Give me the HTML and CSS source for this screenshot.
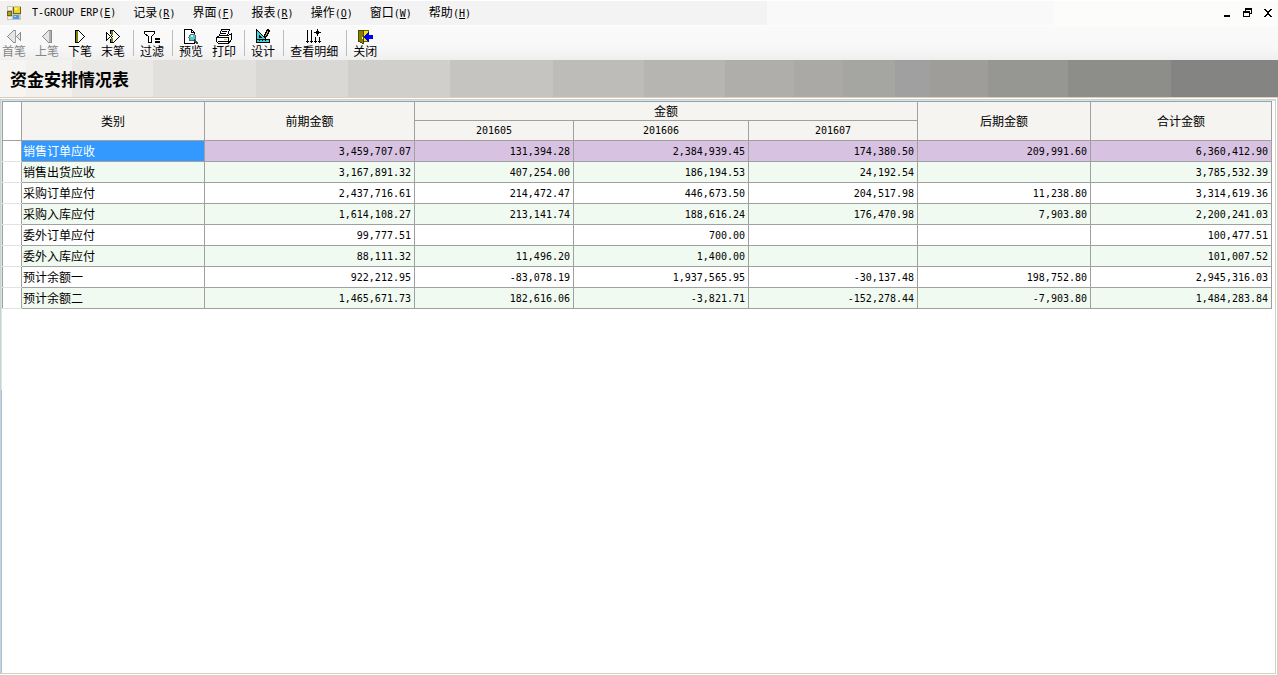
FILE: index.html
```html
<!DOCTYPE html>
<html lang="zh-CN">
<head>
<meta charset="utf-8">
<title>资金安排情况表</title>
<link rel="stylesheet" href="styles.css">
</head>
<body>
<header class="menubar">
  <svg class="app-icon" width="14" height="14" viewBox="0 0 14 14" shape-rendering="crispEdges" aria-hidden="true">
    <path fill="#c9c5bb" d="M0 0h14v14H0z"/><path fill="#f4f2ea" d="M1 1h4v3H1zM1 11h4v2H1z"/>
    <path fill="#6b6410" d="M0 5h5v5H0zM6 1h8v7H6z"/><path fill="#a8a02a" d="M1 6h3v3H1z"/>
    <path fill="#f0d820" d="M7 1h6v6H7z"/><path fill="#fff7a0" d="M8 2h2v2H8z"/><path fill="#4a9be8" d="M6 9h6v4H6z"/><path fill="#a9d3f8" d="M7 10h2v1H7z"/>
  </svg>
  <nav class="menus">
    <button>T-GROUP ERP(<u>E</u>)</button>
    <button><span>记录</span>(<u>R</u>)</button>
    <button><span>界面</span>(<u>F</u>)</button>
    <button><span>报表</span>(<u>R</u>)</button>
    <button><span>操作</span>(<u>O</u>)</button>
    <button><span>窗口</span>(<u>W</u>)</button>
    <button><span>帮助</span>(<u>H</u>)</button>
  </nav>
  <div class="window-controls">
    <button aria-label="最小化"><svg width="10" height="10" viewBox="0 0 10 10" shape-rendering="crispEdges"><path d="M1 7h6v2H1z"/></svg></button>
    <button aria-label="还原"><svg width="10" height="10" viewBox="0 0 10 10" shape-rendering="crispEdges"><path d="M2 0h7v6H7V5h1V2H3v1H2zM0 3h7v6H0zM1 5v3h5V5z" fill-rule="evenodd"/></svg></button>
    <button aria-label="关闭"><svg width="10" height="10" viewBox="0 0 10 10" shape-rendering="crispEdges"><path d="M1 1h2v1h1v1h2V2h1V1h2v1H8v1H7v1H6v2h1v1h1v1h1v1H7V8H6V7H4v1H3v1H1V8h1V7h1V6h1V4H3V3H2V2H1z"/></svg></button>
  </div>
</header>

<div class="toolbar" role="toolbar">
  <button disabled>
    <svg width="16" height="16" viewBox="0 0 16 16" shape-rendering="crispEdges"><path fill="#e6e6e6" stroke="#8c8c8c" d="M7.500 1.500L1.500 7.500L7.500 13.500H9.500V1.500zM14.500 3.500L10.500 7.500L14.500 11.500z"/><path fill="#a0a0a0" d="M9 1h1v13H9z"/></svg>
    <span>首笔</span>
  </button>
  <button disabled>
    <svg width="16" height="16" viewBox="0 0 16 16" shape-rendering="crispEdges"><path fill="#e6e6e6" stroke="#8c8c8c" d="M9.500 1.500L3.500 7.500L9.500 13.500H12.500V1.500z"/><path fill="#b0b0b0" d="M10 2h2v11h-2z"/></svg>
    <span>上笔</span>
  </button>
  <button>
    <svg width="16" height="16" viewBox="0 0 16 16" shape-rendering="crispEdges"><path fill="#fff" stroke="#000" d="M3.500 1.500H6.500L12.500 7.500L6.500 13.500H3.500z"/><path fill="#808000" d="M4 2h2v11H4z"/></svg>
    <span>下笔</span>
  </button>
  <button>
    <svg width="16" height="16" viewBox="0 0 16 16" shape-rendering="crispEdges"><path fill="#fff" stroke="#000" d="M1.500 3.500L5.500 7.500L1.500 11.500zM5.500 1.500H8.500L14.500 7.500L8.500 13.500H5.500V10.500L7.500 7.500L5.500 4.500z"/><path fill="#808000" d="M6 2h2v4H6zM6 9h2v4H6z"/></svg>
    <span>末笔</span>
  </button>
  <i class="separator"></i>
  <button>
    <svg width="16" height="16" viewBox="0 0 16 16" shape-rendering="crispEdges"><path fill="#fff" stroke="#000" d="M.5 2.500H10.500V4.500L7.500 7.500V13.500H4.500V7.500L.5 4.500z"/><path d="M11 9h5v2h-5zM11 12h5v2h-5z"/></svg>
    <span>过滤</span>
  </button>
  <i class="separator"></i>
  <button>
    <svg width="18" height="16" viewBox="0 0 18 16" shape-rendering="crispEdges"><path fill="#fff" stroke="#000" d="M2.500 .5H9.500L12.500 3.500V14.500H2.500z"/><path fill="none" stroke="#000" d="M9.500 .5V3.500H12.500"/><circle cx="10.500" cy="8.500" r="3.500" fill="#45cdd4" stroke="#666"/><path fill="#b7ffff" d="M9 6h2v2H9z"/><path stroke="#444" stroke-width="2" d="M12 11l4 4"/></svg>
    <span>预览</span>
  </button>
  <button>
    <svg width="18" height="16" viewBox="0 0 18 16" shape-rendering="crispEdges"><path fill="#fff" stroke="#000" d="M6.500 .5H14.500L12.500 6.500H4.500z"/><path stroke="#000" d="M7 2.500h5M6 4.500h5"/><path fill="#fff" stroke="#000" d="M4.500 6.500H13.500L16.500 4.500V10.500L13.500 14.500H3.500L1.500 12.500V8.500z"/><path stroke="#000" d="M2 8.500H14M3 12.500H13M13.500 8V14"/><path stroke="#e5c800" d="M9 10.500h3"/></svg>
    <span>打印</span>
  </button>
  <i class="separator"></i>
  <button>
    <svg width="16" height="16" viewBox="0 0 16 16" shape-rendering="crispEdges"><path fill="#35d5dc" stroke="#000" d="M1.500 .5L11.500 10.500H1.500z"/><path fill="#fff" stroke="#000" d="M4.500 6.500L6.500 8.500H4.500z"/><path fill="#35d5dc" stroke="#000" d="M1.500 10.500H14.500V13.500H1.500z"/><path stroke="#000" d="M4.500 10v2M7.500 10v2M10.500 10v2"/><path fill="#d9ad28" stroke="#000" d="M12.500 .5L14.500 1.500L11.500 7.500L9.500 8.500V6.500z"/></svg>
    <span>设计</span>
  </button>
  <i class="separator"></i>
  <button>
    <svg width="16" height="16" viewBox="0 0 16 16" shape-rendering="crispEdges"><path d="M1 1h1v13H1zM5 1h1v13H5zM0 12h3v1H0zM4 12h3v1H4zM11 0h1v7h-1zM8 3h7v1H8zM10 2h3v3h-3zM9 8h1v6H9zM8 12h3v1H8zM13 8h1v6h-1zM12 12h3v1h-3z"/></svg>
    <span>查看明细</span>
  </button>
  <i class="separator"></i>
  <button>
    <svg width="16" height="16" viewBox="0 0 16 16" shape-rendering="crispEdges"><path fill="#ffe400" stroke="#655f00" d="M3.500 1.500H11.500V12.500H3.500z"/><path fill="#858000" stroke="#4d4900" d="M1.500 1.500H6.500V14.500L1.500 12.500z"/><path fill="#fff" d="M5 8h1v2H5z"/><path fill="#0000f0" d="M7 7h1V6h1V5h1V4h1V3h1v3h4v4h-4v3h-1v-1h-1v-1H9v-1H8V9H7z"/></svg>
    <span>关闭</span>
  </button>
</div>

<h1 class="banner">资金安排情况表</h1>

<main class="frame">
  <div class="sheet">
    <table class="grid">
      <colgroup><col class="c-mark"><col class="c-type"><col class="c-prior"><col class="c-m5"><col class="c-m6"><col class="c-m7"><col class="c-later"><col class="c-total"></colgroup>
      <thead>
        <tr><td rowspan="2" class="mark"></td><th rowspan="2">类别</th><th rowspan="2">前期金额</th><th colspan="3">金额</th><th rowspan="2">后期金额</th><th rowspan="2">合计金额</th></tr>
        <tr><th>201605</th><th>201606</th><th>201607</th></tr>
      </thead>
      <tbody>
        <tr class="selected"><td class="mark"></td><th>销售订单应收</th><td>3,459,707.07</td><td>131,394.28</td><td>2,384,939.45</td><td>174,380.50</td><td>209,991.60</td><td>6,360,412.90</td></tr>
        <tr><td class="mark"></td><th>销售出货应收</th><td>3,167,891.32</td><td>407,254.00</td><td>186,194.53</td><td>24,192.54</td><td></td><td>3,785,532.39</td></tr>
        <tr><td class="mark"></td><th>采购订单应付</th><td>2,437,716.61</td><td>214,472.47</td><td>446,673.50</td><td>204,517.98</td><td>11,238.80</td><td>3,314,619.36</td></tr>
        <tr><td class="mark"></td><th>采购入库应付</th><td>1,614,108.27</td><td>213,141.74</td><td>188,616.24</td><td>176,470.98</td><td>7,903.80</td><td>2,200,241.03</td></tr>
        <tr><td class="mark"></td><th>委外订单应付</th><td>99,777.51</td><td></td><td>700.00</td><td></td><td></td><td>100,477.51</td></tr>
        <tr><td class="mark"></td><th>委外入库应付</th><td>88,111.32</td><td>11,496.20</td><td>1,400.00</td><td></td><td></td><td>101,007.52</td></tr>
        <tr><td class="mark"></td><th>预计余额一</th><td>922,212.95</td><td>-83,078.19</td><td>1,937,565.95</td><td>-30,137.48</td><td>198,752.80</td><td>2,945,316.03</td></tr>
        <tr><td class="mark"></td><th>预计余额二</th><td>1,465,671.73</td><td>182,616.06</td><td>-3,821.71</td><td>-152,278.44</td><td>-7,903.80</td><td>1,484,283.84</td></tr>
      </tbody>
    </table>
  </div>
</main>
</body>
</html>
```

FILE: styles.css
```css
* { box-sizing: border-box; }

body {
  margin: 0;
  min-height: 100vh;
  display: flex;
  flex-direction: column;
  background: #fff;
  color: #000;
  font: 12px/14px "Noto Sans CJK SC", sans-serif;
}

button {
  border: 0;
  padding: 0;
  background: none;
  color: inherit;
  font: inherit;
  white-space: nowrap;
}

svg { display: block; }

.menubar {
  display: flex;
  align-items: center;
  height: 25px;
  padding: 0 5px 0 7px;
  border-top: 1px solid #fff;
  background: linear-gradient(90deg, #f2f1f0 9.400%, #f3f3f3 9.400% 60%, #f9f9f9 60% 82.500%, #fcfdfa 82.500%);
}

.menus {
  display: flex;
  gap: 17px;
  margin-left: 11px;
}

.menus button {
  font-family: "DejaVu Sans Mono", monospace;
  font-size: 10px;
}

.menus span { font: 12px/14px "Noto Sans CJK SC", sans-serif; }

.window-controls {
  display: flex;
  gap: 10px;
  margin-left: auto;
}

.toolbar {
  display: flex;
  gap: 9px;
  height: 35px;
  padding: 3px 2px 0;
  border-top: 1px solid #fdfdfb;
  background: linear-gradient(#fafafa, #f8f8f8 60%, #efefef);
}

.toolbar button {
  display: flex;
  flex-direction: column;
  align-items: center;
  height: 28px;
}

.toolbar svg { flex: none; }
.toolbar span { line-height: 12px; }
.toolbar button:disabled { color: #858585; }

.separator {
  width: 1px;
  height: 26px;
  margin: 1px -3px 0 -1px;
  background: #bdbdbd;
}

.banner {
  height: 37px;
  margin: 0;
  padding: 0 10px;
  font-size: 17px;
  line-height: 37px;
  background: linear-gradient(90deg,
    #f6f5f1 2%, #f2f1ee 2% 5.600%, #eae9e6 5.600% 12%,
    #e1e0dc 12% 20%, #d9d8d4 20% 27.200%, #d0cfcc 27.200% 35.200%,
    #c6c4c1 35.200% 43.300%, #bebcb9 43.300% 50.400%, #b6b5b2 50.400% 56.700%,
    #afaeab 56.700% 62.100%, #aaa9a6 62.100% 66%, #a5a5a2 66% 70%,
    #a0a0a0 70% 72.800%, #9f9d9a 72.800% 77.300%, #969693 77.300% 83.600%,
    #8d8d8a 83.600% 91.600%, #848483 91.600%);
}

.frame {
  flex: 1;
  display: flex;
  padding: 1px 1px 1px 0;
  border: solid #d6cec2;
  border-width: 1px 1px 1px 0;
}

.sheet {
  flex: 1;
  padding: 1px 3px 0 1px;
  border: 1px solid #d6cec2;
  background: linear-gradient(#c4e8f8, #c4e8f8) top / 100% 1px no-repeat,
    linear-gradient(#d0e8f4 290px, #9cc4ea 290px) left / 1px 100% no-repeat #fff;
}

.grid {
  width: 100%;
  table-layout: fixed;
  border-collapse: collapse;
  background: #fff;
}

.c-mark { width: 19px; }
.c-type { width: 183px; }
.c-prior { width: 210px; }
.c-m5 { width: 159px; }
.c-m6 { width: 175px; }
.c-m7 { width: 169px; }
.c-later { width: 173px; }
.c-total { width: 181px; }

.grid th,
.grid td {
  height: 21px;
  padding: 0 3px;
  border: 1px solid #a0a0a0;
  font-weight: normal;
}

.grid td {
  text-align: right;
  font-family: "DejaVu Sans Mono", monospace;
  font-size: 10px;
}

.grid thead th { height: 20px; background: #f6f4f0; }
.grid thead tr:first-child th { height: 19px; }
.grid thead tr + tr th { font-family: "DejaVu Sans Mono", monospace; font-size: 10px; }
.grid tbody td { padding-top: 1px; }
.grid tbody th { padding: 0 1px; text-align: left; }
.grid tbody tr:nth-child(even) { background: #f0faf0; }
.grid tbody tr.selected { background: #d8c2e2; }
.grid tbody tr.selected th { background: #3399ff; color: #fff; }
.grid tbody td.mark { background: #fff; border-bottom-color: #e2e2e2; }
```
